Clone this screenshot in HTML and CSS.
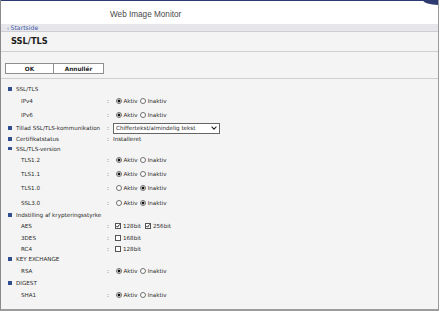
FILE: index.html
```html
<!DOCTYPE html>
<html lang="da">
<head>
<meta charset="utf-8">
<title>SSL/TLS</title>
<link rel="stylesheet" href="styles.css">
</head>
<body>
<div class="page">
  <header class="hdr"><span class="brand">Web Image Monitor</span></header>
  <nav class="crumb"><a class="home" href="#"><span class="arr">&#8249;</span>Startside</a></nav>
  <main class="content">
    <h1 class="title">SSL/TLS</h1>
    <div class="actions"><button class="btn ok">OK</button><button class="btn cancel">Annullér</button></div>
    <div class="rows">
      <div class="row h10"><span class="lbl sec"><i class="bul"></i>SSL/TLS</span></div>
      <div class="row h14"><span class="lbl sub">IPv4</span><span class="col">:</span><span class="val"><i class="radio on"></i>Aktiv<i class="radio"></i>Inaktiv</span></div>
      <div class="row h14"><span class="lbl sub">IPv6</span><span class="col">:</span><span class="val"><i class="radio on"></i>Aktiv<i class="radio"></i>Inaktiv</span></div>
      <div class="row h12"><span class="lbl sec"><i class="bul"></i>Tillad SSL/TLS-kommunikation</span><span class="col">:</span><span class="select">Chiffertekst/almindelig tekst<svg class="chev" viewBox="0 0 6 4"><path d="M0.6 0.7 L3 3.1 L5.4 0.7" fill="none" stroke="#222" stroke-width="1.1"/></svg></span></div>
      <div class="row h10"><span class="lbl sec"><i class="bul"></i>Certifikatstatus</span><span class="col">:</span><span class="txt">Installeret</span></div>
      <div class="row h9"><span class="lbl sec"><i class="bul"></i>SSL/TLS-version</span></div>
      <div class="row h14"><span class="lbl sub">TLS1.2</span><span class="col">:</span><span class="val"><i class="radio on"></i>Aktiv<i class="radio"></i>Inaktiv</span></div>
      <div class="row h14"><span class="lbl sub">TLS1.1</span><span class="col">:</span><span class="val"><i class="radio on"></i>Aktiv<i class="radio"></i>Inaktiv</span></div>
      <div class="row h14"><span class="lbl sub">TLS1.0</span><span class="col">:</span><span class="val"><i class="radio"></i>Aktiv<i class="radio on"></i>Inaktiv</span></div>
      <div class="row h15"><span class="lbl sub">SSL3.0</span><span class="col">:</span><span class="val"><i class="radio"></i>Aktiv<i class="radio on"></i>Inaktiv</span></div>
      <div class="row h10"><span class="lbl sec"><i class="bul"></i>Indstilling af krypteringsstyrke</span></div>
      <div class="row h12"><span class="lbl sub">AES</span><span class="col">:</span><span class="val chk"><svg class="cb" viewBox="0 0 6 6"><rect x="0.5" y="0.5" width="5" height="5" fill="#fff" stroke="#555"/><path d="M1.3 2.9 L2.5 4.2 L4.7 1.4" fill="none" stroke="#111" stroke-width="0.9"/></svg>128bit<svg class="cb" viewBox="0 0 6 6"><rect x="0.5" y="0.5" width="5" height="5" fill="#fff" stroke="#555"/><path d="M1.3 2.9 L2.5 4.2 L4.7 1.4" fill="none" stroke="#111" stroke-width="0.9"/></svg>256bit</span></div>
      <div class="row h11"><span class="lbl sub">3DES</span><span class="col">:</span><span class="val chk"><svg class="cb" viewBox="0 0 6 6"><rect x="0.5" y="0.5" width="5" height="5" fill="#fff" stroke="#555"/></svg>168bit</span></div>
      <div class="row h11"><span class="lbl sub">RC4</span><span class="col">:</span><span class="val chk"><svg class="cb" viewBox="0 0 6 6"><rect x="0.5" y="0.5" width="5" height="5" fill="#fff" stroke="#555"/></svg>128bit</span></div>
      <div class="row h10"><span class="lbl sec"><i class="bul"></i>KEY EXCHANGE</span></div>
      <div class="row h14"><span class="lbl sub">RSA</span><span class="col">:</span><span class="val"><i class="radio on"></i>Aktiv<i class="radio"></i>Inaktiv</span></div>
      <div class="row h10"><span class="lbl sec"><i class="bul"></i>DIGEST</span></div>
      <div class="row h14"><span class="lbl sub">SHA1</span><span class="col">:</span><span class="val"><i class="radio on"></i>Aktiv<i class="radio"></i>Inaktiv</span></div>
    </div>
  </main>
</div>
</body>
</html>
```
FILE: styles.css
```css
* { box-sizing: border-box; }
html, body { margin: 0; padding: 0; background: #fff; }
body { font-family: "DejaVu Sans", Verdana, sans-serif; font-size: 5.6px; color: #2a2a2a; }

.page {
  width: 439px;
  height: 311px;
  border-left: 1px solid #8a8a8a;
  border-right: 1px solid #9a9a9a;
  border-bottom: 2px solid #9c9c9c;
  background: #f4f4f4;
  display: flex;
  flex-direction: column;
  overflow: hidden;
}

.hdr {
  position: relative;
  height: 24px;
  border-top: 1.5px solid #2d3b70;
  background: #fff;
  display: flex;
  align-items: center;
  padding: 4px 0 0 109px;
}
.hdr::after {
  content: "";
  position: absolute;
  top: -1px;
  right: -1px;
  width: 16px;
  height: 5px;
  background: #2d3b70;
  border-bottom-left-radius: 16px 5px;
}
.brand { font-family: "Liberation Sans", Arial, sans-serif; font-size: 8.2px; color: #4a4a4a; }

.crumb {
  height: 8px;
  background: #e7e7eb;
  border-bottom: 1px solid #cdcdd2;
  display: flex;
  align-items: center;
  padding-left: 6px;
}
.home { color: #3a58a8; text-decoration: none; font-size: 6.2px; line-height: 7px; }
.arr { font-size: 5px; margin-right: 1.5px; }

.content { flex: 1; }

.title {
  margin: 0;
  height: 20px;
  line-height: 19px;
  padding-left: 10px;
  font-size: 8.3px;
  font-weight: bold;
  color: #1e1e1e;
  border-bottom: 1px solid #cfcfd3;
}

.actions {
  height: 27px;
  padding: 11px 0 0 4px;
  display: flex;
  align-items: flex-start;
  border-bottom: 1px solid #cfcfd3;
}
.btn {
  height: 11px;
  width: 49px;
  padding: 0;
  margin: 0;
  background: #fff;
  border: 1px solid #8e8e8e;
  font-family: "DejaVu Sans", Verdana, sans-serif;
  font-size: 5.8px;
  font-weight: bold;
  color: #1e1e1e;
}
.btn.cancel { width: 50px; border-left: none; }

.rows { padding: 5px 0 0 7px; }
.row { display: flex; align-items: center; }
.h9 { height: 9px; }
.h10 { height: 10px; }
.h11 { height: 11px; }
.h12 { height: 12px; }
.h14 { height: 14px; }
.h15 { height: 15px; }

.lbl { width: 98px; flex: none; white-space: nowrap; display: flex; align-items: center; }
.sub { padding-left: 13px; }
.bul { width: 3.5px; height: 3.5px; background: #2f4d8f; margin-right: 4.5px; display: inline-block; }
.col { width: 7px; flex: none; padding-left: 1px; color: #444; }

.val { display: flex; align-items: center; padding-left: 3px; }
.radio {
  width: 6px;
  height: 6px;
  border-radius: 50%;
  border: 1px solid #707070;
  background: #fff;
  display: inline-block;
  margin-right: 1.5px;
}
.radio.on { background: radial-gradient(circle, #111 0 1.3px, #fff 1.7px); }
.val .radio:nth-of-type(2) { margin-left: 2.5px; }

.chk { padding-left: 2px; }
.cb { width: 6px; height: 6px; margin-right: 2px; flex: none; }
.cb:nth-of-type(2) { margin-left: 4px; }

.select {
  width: 107px;
  height: 11px;
  background: #fff;
  border: 1px solid #666;
  display: flex;
  align-items: center;
  justify-content: space-between;
  padding: 0 2px;
  color: #1e1e1e;
  white-space: nowrap;
}
.chev { width: 6px; height: 4px; }
.txt { color: #1e1e1e; }
```
